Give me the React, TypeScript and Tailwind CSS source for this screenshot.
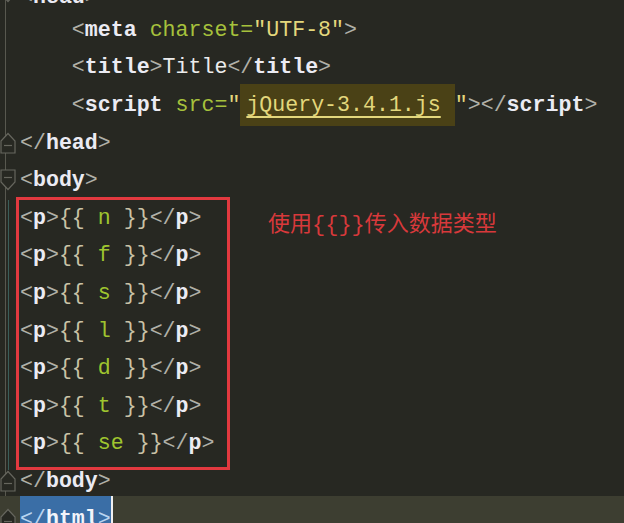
import React from "react";

type Tok = { t: string; c: string };

const br = (t: string): Tok => ({ t, c: "text-[#b0b0a8]" });
const tag = (t: string): Tok => ({ t, c: "font-bold text-[#ebebf3]" });
const attr = (t: string): Tok => ({ t, c: "text-[#a6c13c]" });
const str = (t: string): Tok => ({ t, c: "text-[#e3d77c]" });
const txt = (t: string): Tok => ({ t, c: "text-[#ececec]" });
const brace = (t: string): Tok => ({ t, c: "text-[#c9c2a6]" });
const v = (t: string): Tok => ({ t, c: "text-[#9fc52f]" });

const pLine = (name: string): Tok[] => [
  br("<"),
  tag("p"),
  br(">"),
  brace("{{ "),
  v(name),
  brace(" }}"),
  br("</"),
  tag("p"),
  br(">"),
];

const FoldDown = () => (
  <svg width="16" height="22" viewBox="0 0 16 22" className="absolute left-0">
    <path d="M1 1 V13 L8 20.5 L15 13 V1 Z" fill="#272822" stroke="#66665e" strokeWidth="1.2" />
    <path d="M4 8.5 H12" stroke="#66665e" strokeWidth="1.2" />
  </svg>
);

const FoldUp = () => (
  <svg width="16" height="22" viewBox="0 0 16 22" className="absolute left-0">
    <path d="M1 21 V9 L8 1.5 L15 9 V21 Z" fill="#272822" stroke="#66665e" strokeWidth="1.2" />
    <path d="M4 13.5 H12" stroke="#66665e" strokeWidth="1.2" />
  </svg>
);

type Line = { indent?: number; toks: Tok[]; fold?: "up" | "down" };

const lines: Line[] = [
  { toks: [br("<"), tag("head"), br(">")], fold: "down" },
  {
    indent: 4,
    toks: [br("<"), tag("meta"), txt(" "), attr("charset="), str('"UTF-8"'), br(">")],
  },
  {
    indent: 4,
    toks: [br("<"), tag("title"), br(">"), txt("Title"), br("</"), tag("title"), br(">")],
  },
  { indent: 4, toks: [] },
  { toks: [br("</"), tag("head"), br(">")], fold: "up" },
  { toks: [br("<"), tag("body"), br(">")], fold: "down" },
  { toks: pLine("n") },
  { toks: pLine("f") },
  { toks: pLine("s") },
  { toks: pLine("l") },
  { toks: pLine("d") },
  { toks: pLine("t") },
  { toks: pLine("se") },
  { toks: [br("</"), tag("body"), br(">")], fold: "up" },
];

const App = () => {
  return (
    <div className="relative h-[523px] w-[624px] overflow-hidden bg-[#272822] font-['Liberation_Mono',monospace] text-[21.6px]">
      {/* gutter guide */}
      <div className="absolute left-[5px] top-0 h-full w-px bg-[#58584f]" />
      <div className="absolute left-[8px] top-[200px] h-[270px] w-px bg-[#3a5e5a]" />

      <div className="relative mt-[-26.4px] flex flex-col">
        {lines.map((line, i) => (
          <div key={i} className="flex h-[37.6px] items-center">
            <div className="relative flex h-full w-[20px] shrink-0 items-center">
              {line.fold === "down" && <FoldDown />}
              {line.fold === "up" && <FoldUp />}
            </div>
            <div className={i === 0 ? "mt-[10px] whitespace-pre" : "whitespace-pre"}>
              {" ".repeat(line.indent ?? 0)}
              {i === 3 ? (
                <>
                  <span className="text-[#b0b0a8]">{"<"}</span>
                  <span className="font-bold text-[#ebebf3]">script</span>
                  <span> </span>
                  <span className="text-[#a6c13c]">src=</span>
                  <span className="text-[#e3d77c]">"</span>
                  <span className="inline-block bg-[#4a4116] pl-[6px] pr-[14px] leading-[42px] text-[#e3d77c] underline decoration-[#e3d77c] underline-offset-[5px]">
                    jQuery-3.4.1.js
                  </span>
                  <span className="text-[#e3d77c]">"</span>
                  <span className="text-[#b0b0a8]">{"></"}</span>
                  <span className="font-bold text-[#ebebf3]">script</span>
                  <span className="text-[#b0b0a8]">{">"}</span>
                </>
              ) : (
                line.toks.map((tk, j) => (
                  <span key={j} className={tk.c}>
                    {tk.t}
                  </span>
                ))
              )}
            </div>
          </div>
        ))}

        {/* current line */}
        <div className="mt-[-4px] flex h-[41.6px] items-end bg-[#3d3e31]">
          <div className="relative flex h-[37.6px] w-[20px] shrink-0 items-center">
            <FoldUp />
          </div>
          <div className="flex h-[41.6px] items-center bg-[#3a6ea6] pt-[4px] whitespace-pre">
            <span className="text-[#b9d4f0]">{"</"}</span>
            <span className="font-bold text-[#f2f4fa]">html</span>
            <span className="text-[#b9d4f0]">{">"}</span>
          </div>
          <div className="h-[41.6px] w-[2px] bg-[#f0f0f0]" />
        </div>
      </div>

      {/* annotation */}
      <div className="absolute left-[16px] top-[197px] h-[273px] w-[214px] border-[3px] border-[#e2393f]" />
      <p className="absolute left-[268px] top-[209px] font-['Liberation_Mono','Noto_Sans_CJK_SC',sans-serif] text-[22px] text-[#d8393b]">
        使用{"{{}}"}传入数据类型
      </p>
    </div>
  );
};

export default App;
